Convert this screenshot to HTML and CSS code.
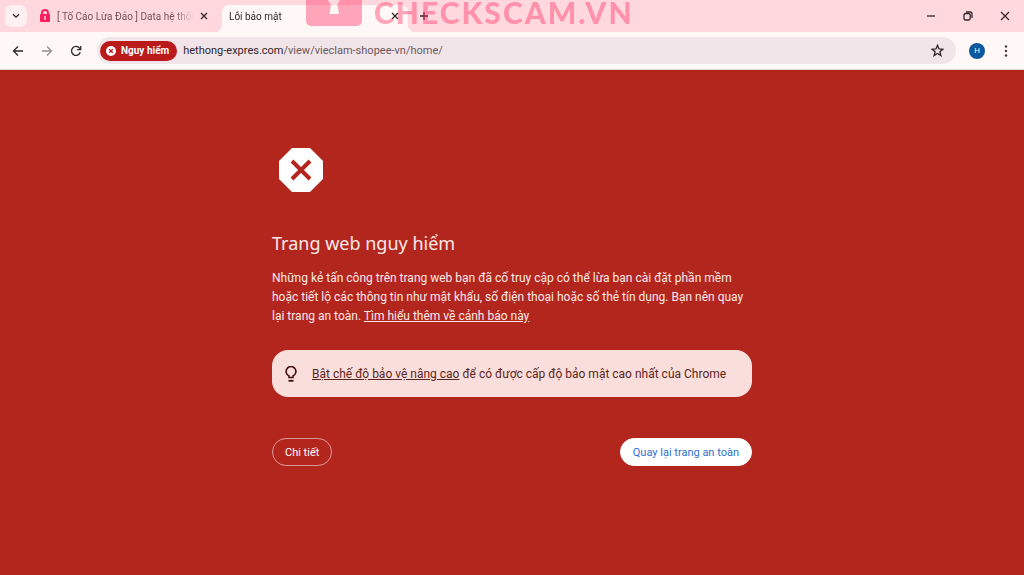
FILE: index.html
```html
<!DOCTYPE html>
<html lang="vi">
<head>
    <meta charset="UTF-8">
    <meta name="viewport" content="width=device-width, initial-scale=1.0">
    <title>Lỗi bảo mật</title>
    <link rel="stylesheet" href="styles.css">
</head>
<body>

    <!-- Tab strip -->
    <header class="tab-strip">
        <button type="button" class="tab-search" aria-label="Tìm thẻ">
            <svg width="8" height="6" viewBox="0 0 8 6"><path d="M1 1.2 4 4.2 7 1.2"/></svg>
        </button>
        <div class="tab">
            <svg class="lock" width="12" height="14" viewBox="0 0 12 14">
                <path d="M3 6V4a3 3 0 0 1 6 0v2" fill="none" stroke="#ff1f5e" stroke-width="2"/>
                <rect x="1" y="5" width="10" height="8" rx="1" fill="#ff1f5e"/>
                <path d="M6 7v4" stroke="#ffd8de" stroke-width="1.4"/>
            </svg>
            <span class="tab-title">[ Tố Cáo Lừa Đảo ] Data hệ thối</span>
            <button type="button" class="icon-btn" aria-label="Đóng thẻ">
                <svg width="8" height="8" viewBox="0 0 8 8"><path d="m1 1 6 6M7 1 1 7"/></svg>
            </button>
        </div>
        <div class="tab active">
            <span class="tab-title">Lỗi bảo mật</span>
            <button type="button" class="icon-btn" aria-label="Đóng thẻ">
                <svg width="8" height="8" viewBox="0 0 8 8"><path d="m1 1 6 6M7 1 1 7"/></svg>
            </button>
        </div>
        <button type="button" class="icon-btn new-tab" aria-label="Thẻ mới">
            <svg width="10" height="10" viewBox="0 0 10 10"><path d="M5 1v8M1 5h8"/></svg>
        </button>
        <div class="window-controls">
            <button type="button" class="icon-btn" aria-label="Thu nhỏ">
                <svg width="10" height="10" viewBox="0 0 10 10"><path d="M1 5h8"/></svg>
            </button>
            <button type="button" class="icon-btn" aria-label="Khôi phục">
                <svg width="10" height="10" viewBox="0 0 10 10"><rect x="1" y="2.5" width="6.2" height="6.5" rx="1.5"/><path d="M3 1h4a2 2 0 0 1 2 2v4"/></svg>
            </button>
            <button type="button" class="icon-btn" aria-label="Đóng">
                <svg width="10" height="10" viewBox="0 0 10 10"><path d="m1 1 8 8M9 1 1 9"/></svg>
            </button>
        </div>
        <div class="watermark">
            <svg width="56" height="26" viewBox="0 0 56 26">
                <path fill-rule="evenodd" d="M0 0h56v21a5 5 0 0 1-5 5H5a5 5 0 0 1-5-5zM22 0a6 6 0 0 0 3 4L23.500 14h9.500L31.200 4A6 6 0 0 0 34 0z"/>
            </svg>
            <span>CHECKSCAM.VN</span>
        </div>
    </header>

    <!-- Toolbar -->
    <nav class="toolbar">
        <button type="button" class="icon-btn" aria-label="Quay lại">
            <svg width="12" height="12" viewBox="0 0 12 12"><path d="M11 6H1.500M6 1.500 1.500 6 6 10.500"/></svg>
        </button>
        <button type="button" class="icon-btn" aria-label="Tiến" disabled>
            <svg width="12" height="12" viewBox="0 0 12 12"><path d="M1 6h9.500M6 1.500 10.500 6 6 10.500"/></svg>
        </button>
        <button type="button" class="icon-btn" aria-label="Tải lại">
            <svg width="12" height="12" viewBox="0 0 12 12"><path d="M10.300 7.300A4.500 4.500 0 1 1 9.600 3.200L10.600 4.400M10.700 1v3.600H7.100"/></svg>
        </button>
        <div class="address-bar">
            <span class="danger-chip">
                <svg width="10" height="10" viewBox="0 0 10 10"><circle cx="5" cy="5" r="5" fill="#fff"/><path d="m3.200 3.200 3.600 3.600M6.800 3.200 3.200 6.800" stroke="#ba1a1a" stroke-width="1.300"/></svg>
                Nguy hiểm
            </span>
            <span class="url">hethong-expres.com<span class="path">/view/vieclam-shopee-vn/home/</span></span>
            <button type="button" class="icon-btn star" aria-label="Đánh dấu trang">
                <svg width="13" height="13" viewBox="0 0 13 13"><path d="M6.500 1.300 8 4.900l3.900.3-3 2.500 1 3.800-3.400-2.100-3.400 2.100 1-3.800-3-2.500L5 4.900z"/></svg>
            </button>
        </div>
        <button type="button" class="avatar">H</button>
        <button type="button" class="icon-btn" aria-label="Menu">
            <svg class="dots" width="4" height="12" viewBox="0 0 4 12"><circle cx="2" cy="1.500" r="1.200"/><circle cx="2" cy="6" r="1.200"/><circle cx="2" cy="10.500" r="1.200"/></svg>
        </button>
    </nav>

    <!-- Warning page -->
    <main class="page">
        <div class="container">
            <svg class="stop-icon" width="44" height="44" viewBox="0 0 44 44">
                <path d="M13 0h18l13 13v18L31 44H13L0 31V13z" fill="#fff"/>
                <path d="m13 13 18 18M31 13 13 31" stroke="#b3261e" stroke-width="4"/>
            </svg>
            <h1>Trang web nguy hiểm</h1>
            <p>Những kẻ tấn công trên trang web bạn đã cố truy cập có thể lừa bạn cài đặt phần mềm hoặc tiết lộ các thông tin như mật khẩu, số điện thoại hoặc số thẻ tín dụng. Bạn nên quay lại trang an toàn. <a href="#">Tìm hiểu thêm về cảnh báo này</a></p>
            <div class="hint">
                <svg width="12" height="16" viewBox="0 0 12 16">
                    <path d="M4 11.500V9.900A4.900 4.900 0 1 1 8 9.900v1.600z" fill="none" stroke="#410e0b" stroke-width="1.600"/>
                    <path d="M3.500 14.800h5" stroke="#410e0b" stroke-width="1.800"/>
                </svg>
                <span><a href="#">Bật chế độ bảo vệ nâng cao</a> để có được cấp độ bảo mật cao nhất của Chrome</span>
            </div>
            <div class="buttons">
                <button type="button" class="btn">Chi tiết</button>
                <button type="button" class="btn primary">Quay lại trang an toàn</button>
            </div>
        </div>
    </main>

</body>
</html>
```
FILE: styles.css
```css
/* Global styles */
* {
    box-sizing: border-box;
}

body {
    margin: 0;
    min-height: 100vh;
    display: flex;
    flex-direction: column;
    font-family: Roboto, "Noto Sans", sans-serif;
    background-color: #b3261e;
}

button {
    font-family: inherit;
    border: none;
    padding: 0;
    background: none;
    cursor: pointer;
}

svg {
    display: block;
    flex: none;
}

a {
    color: inherit;
}

.icon-btn {
    width: 20px;
    height: 20px;
    display: flex;
    align-items: center;
    justify-content: center;
    flex: none;
}

.icon-btn svg,
.tab-search svg {
    fill: none;
    stroke: #332629;
    stroke-width: 1.3;
}

/* Tab strip */
.tab-strip {
    position: relative;
    overflow: hidden;
    height: 32px;
    display: flex;
    align-items: center;
    padding-left: 5px;
    background-color: #ffd8de;
}

.tab-search {
    width: 22px;
    height: 22px;
    border-radius: 7px;
    background-color: #fff0f2;
    display: flex;
    align-items: center;
    justify-content: center;
}

.tab {
    display: flex;
    align-items: center;
    width: 195px;
    height: 27px;
    padding: 0 8px 0 12px;
    font-size: 10px;
    color: #6f5459;
}

.tab .lock {
    margin-right: 6px;
}

.tab-title {
    flex: 1;
    overflow: hidden;
    white-space: nowrap;
    -webkit-mask-image: linear-gradient(to right, #000 85%, transparent);
    mask-image: linear-gradient(to right, #000 85%, transparent);
}

.tab.active {
    position: relative;
    align-self: flex-end;
    width: 186px;
    padding: 0 3px 5px 7px;
    border-radius: 7px 7px 0 0;
    background-color: #fff8f7;
    color: #332629;
}

/* Curved feet of the open tab */
.tab.active::before,
.tab.active::after {
    content: "";
    position: absolute;
    bottom: 0;
    width: 7px;
    height: 7px;
}

.tab.active::before {
    right: 100%;
    background: radial-gradient(circle at 0 0, transparent 7px, #fff8f7 7px);
}

.tab.active::after {
    left: 100%;
    background: radial-gradient(circle at 100% 0, transparent 7px, #fff8f7 7px);
}

.new-tab {
    margin-left: 6px;
}

.window-controls {
    display: flex;
    gap: 17px;
    margin-left: auto;
    padding-right: 9px;
}

.watermark {
    position: absolute;
    top: 0;
    left: 306px;
    display: flex;
    gap: 12px;
    opacity: 0.4;
    color: #ff2a5f;
    fill: #ff2a5f;
    pointer-events: none;
}

.watermark span {
    font-family: Lato, sans-serif;
    font-size: 30px;
    font-weight: 900;
    line-height: 24px;
    letter-spacing: 2px;
}

/* Toolbar */
.toolbar {
    display: flex;
    align-items: center;
    gap: 9px;
    height: 38px;
    padding: 0 8px;
    background-color: #fff8f7;
    border-bottom: 1px solid #e8d5d6;
}

.icon-btn:disabled {
    opacity: 0.5;
}

.address-bar {
    flex: 1;
    display: flex;
    align-items: center;
    height: 27px;
    margin: 0 4px 0 2px;
    padding: 0 9px 0 3px;
    border-radius: 14px;
    background-color: #f1e5e9;
}

.danger-chip {
    display: flex;
    align-items: center;
    gap: 5px;
    height: 20px;
    padding: 0 8px 0 6px;
    border-radius: 10px;
    background-color: #ba1a1a;
    color: #fff;
    font-size: 10px;
    font-weight: bold;
}

.url {
    margin-left: 6px;
    font-size: 11px;
    color: #332629;
}

.url .path {
    color: #6b585c;
}

.star {
    margin-left: auto;
}

.avatar {
    width: 16px;
    height: 16px;
    margin-right: 2px;
    border-radius: 50%;
    background-color: #0b57a0;
    color: #fff;
    font-size: 8px;
    line-height: 16px;
}

.icon-btn .dots {
    fill: #4a3438;
    stroke: none;
}

/* Warning page */
.page {
    flex: 1;
    padding: 78px 16px 32px;
    color: #fff;
}

.container {
    max-width: 480px;
    margin: 0 auto;
}

.stop-icon {
    margin-left: 7px;
}

h1 {
    margin: 39px 0 14px;
    font-family: "Noto Sans", sans-serif;
    font-size: 18px;
    font-weight: normal;
    line-height: 24px;
    color: #fbe9e8;
}

p {
    margin: 0;
    font-size: 12px;
    line-height: 19px;
    color: #fbe9e8;
}

.hint {
    display: flex;
    align-items: center;
    gap: 15px;
    min-height: 47px;
    margin: 24px 0 41px;
    padding: 8px 13px;
    border-radius: 16px;
    background-color: #f9dedc;
    color: #5c2522;
    font-size: 12px;
}

.buttons {
    display: flex;
    justify-content: space-between;
}

.btn {
    height: 28px;
    padding: 0 12px;
    border: 1px solid #dc9a96;
    border-radius: 14px;
    color: #fff;
    font-size: 11px;
}

.btn.primary {
    border-color: #fff;
    background-color: #fff;
    color: #2f6fd0;
}
```
